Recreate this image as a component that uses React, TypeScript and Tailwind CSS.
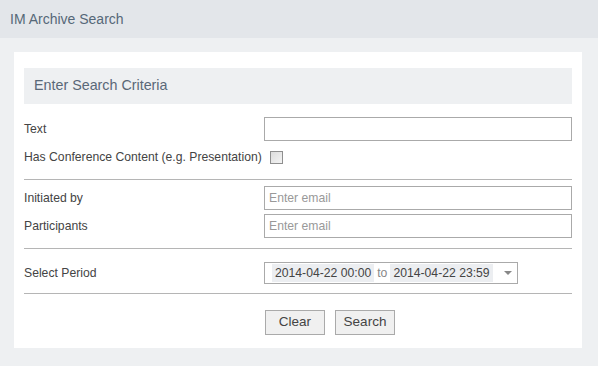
import React from "react"

const font = { fontFamily: '"Liberation Sans", Arial, sans-serif' }

function Row({ label, children, className = "" }: { label: string; children: React.ReactNode; className?: string }) {
  return (
    <div className={`flex items-center ${className}`}>
      <div className="w-[240px] shrink-0 text-[12.2px] text-[#444]">{label}</div>
      <div className="flex-1 flex items-center">{children}</div>
    </div>
  )
}

function Divider({ className = "" }: { className?: string }) {
  return <div className={`h-px bg-[#b5b5b5] ${className}`} />
}

export default function App() {
  return (
    <div className="w-[598px] h-[366px] bg-[#eef0f2] overflow-hidden" style={font}>
      <div className="h-[38px] bg-[#e3e6ea] flex items-center pl-[10px] text-[14px] text-[#566878]">
        IM Archive Search
      </div>

      <div className="ml-[14px] mr-[16px] mt-[14px] bg-white px-[10px] pt-[16px] pb-[13px]">
        <div className="h-[36px] bg-[#eef0f2] flex items-center pl-[10px] text-[14.3px] text-[#5a6878]">
          Enter Search Criteria
        </div>

        <Row label="Text" className="mt-[13px] h-[24px]">
          <input className="w-full h-[24px] border border-[#aaa] bg-white outline-none" />
        </Row>
        <div className="mt-[4px] h-[24px] flex items-center text-[12.2px] text-[#444]">
          <span>Has Conference Content (e.g. Presentation)</span>
          <span className="ml-[8px] w-[13px] h-[13px] border border-[#8f8f8f] bg-gradient-to-br from-[#dcdcdc] to-[#f4f4f4]" />
        </div>

        <Divider className="mt-[10px]" />

        <Row label="Initiated by" className="mt-[6px] h-[24px]">
          <input
            placeholder="Enter email"
            className="w-full h-[24px] border border-[#aaa] bg-white px-[4px] text-[12.2px] text-[#444] placeholder:text-[#999] outline-none"
          />
        </Row>
        <Row label="Participants" className="mt-[4px] h-[24px]">
          <input
            placeholder="Enter email"
            className="w-full h-[24px] border border-[#aaa] bg-white px-[4px] text-[12.2px] text-[#444] placeholder:text-[#999] outline-none"
          />
        </Row>

        <Divider className="mt-[10px]" />

        <Row label="Select Period" className="mt-[13px] h-[22px]">
          <div className="w-[254px] h-[22px] border border-[#aaa] flex items-center pl-[7px] text-[12.2px]">
            <span className="bg-[#eceef1] text-[#444] px-[3px] leading-[18px]">2014-04-22 00:00</span>
            <span className="text-[#888] px-[3px]">to</span>
            <span className="bg-[#eceef1] text-[#444] px-[3px] leading-[18px]">2014-04-22 23:59</span>
            <svg width="8" height="5" viewBox="0 0 8 5" className="ml-[11px]">
              <path d="M0 0 H8 L4 4 Z" fill="#888" />
            </svg>
          </div>
        </Row>

        <Divider className="mt-[9px]" />

        <div className="flex mt-[16px] pl-[241px] gap-[10px]">
          <button className="w-[60px] h-[25px] border border-[#aaa] bg-[#f0f0f0] text-[13.5px] text-[#444]">Clear</button>
          <button className="w-[60px] h-[25px] border border-[#aaa] bg-[#f0f0f0] text-[13.5px] text-[#444]">Search</button>
        </div>
      </div>
    </div>
  )
}
